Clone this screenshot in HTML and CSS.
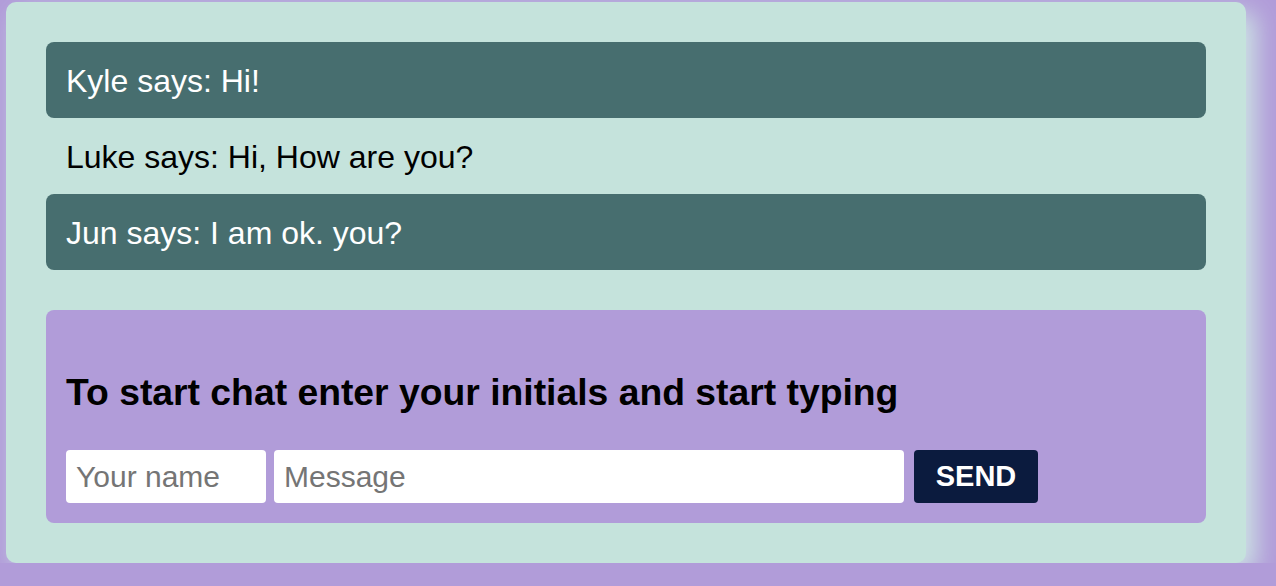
FILE: index.html
```html
<!DOCTYPE html>
<html>
<head>
<meta charset="utf-8">
<link rel="stylesheet" href="styles.css">
</head>
<body>
<div class="card">
  <div class="messages">
    <div class="msg dark">Kyle says: Hi!</div>
    <div class="msg">Luke says: Hi, How are you?</div>
    <div class="msg dark">Jun says: I am ok. you?</div>
  </div>
  <div class="form-box">
    <h2 class="title">To start chat enter your initials and start typing</h2>
    <form class="row">
      <input class="name" type="text" placeholder="Your name">
      <input class="message" type="text" placeholder="Message">
      <button class="send" type="button">SEND</button>
    </form>
  </div>
</div>
</body>
</html>
```
FILE: styles.css
```css
html, body {
  margin: 0;
  padding: 0;
  background: #b19cd9;
  font-family: "Liberation Sans", Arial, sans-serif;
}
body {
  padding: 2px 0 0 6px;
}
.card {
  width: 1240px;
  height: 561px;
  box-sizing: border-box;
  background: #c5e3dc;
  border-radius: 10px;
  padding: 40px;
  box-shadow: 10px 10px 24px rgba(205, 228, 228, 1);
}
.messages {
  display: flex;
  flex-direction: column;
}
.msg {
  height: 76px;
  box-sizing: border-box;
  padding: 2px 20px 0;
  display: flex;
  align-items: center;
  font-size: 32px;
  color: #000;
  border-radius: 8px;
}
.msg.dark {
  background: #476e6f;
  color: #fff;
}
.form-box {
  margin-top: 40px;
  background: #b19cd9;
  border-radius: 8px;
  padding: 60px 20px 20px;
  height: 213px;
  box-sizing: border-box;
}
.title {
  margin: 0;
  font-size: 37.3px;
  font-weight: bold;
  line-height: 44px;
  color: #000;
}
.row {
  margin: 36px 0 0;
  display: flex;
  gap: 8px;
}
.row input {
  height: 53px;
  box-sizing: border-box;
  border: none;
  border-radius: 4px;
  background: #fff;
  font-family: "Liberation Sans", Arial, sans-serif;
  font-size: 30px;
  padding: 0 10px;
  outline: none;
}
.row input::placeholder {
  color: #757575;
}
.name {
  width: 200px;
}
.message {
  width: 630px;
}
.send {
  margin-left: 2px;
  width: 124px;
  height: 53px;
  border: none;
  border-radius: 4px;
  background: #0b1b3e;
  color: #fff;
  font-family: "Liberation Sans", Arial, sans-serif;
  font-size: 29px;
  font-weight: bold;
}
```
